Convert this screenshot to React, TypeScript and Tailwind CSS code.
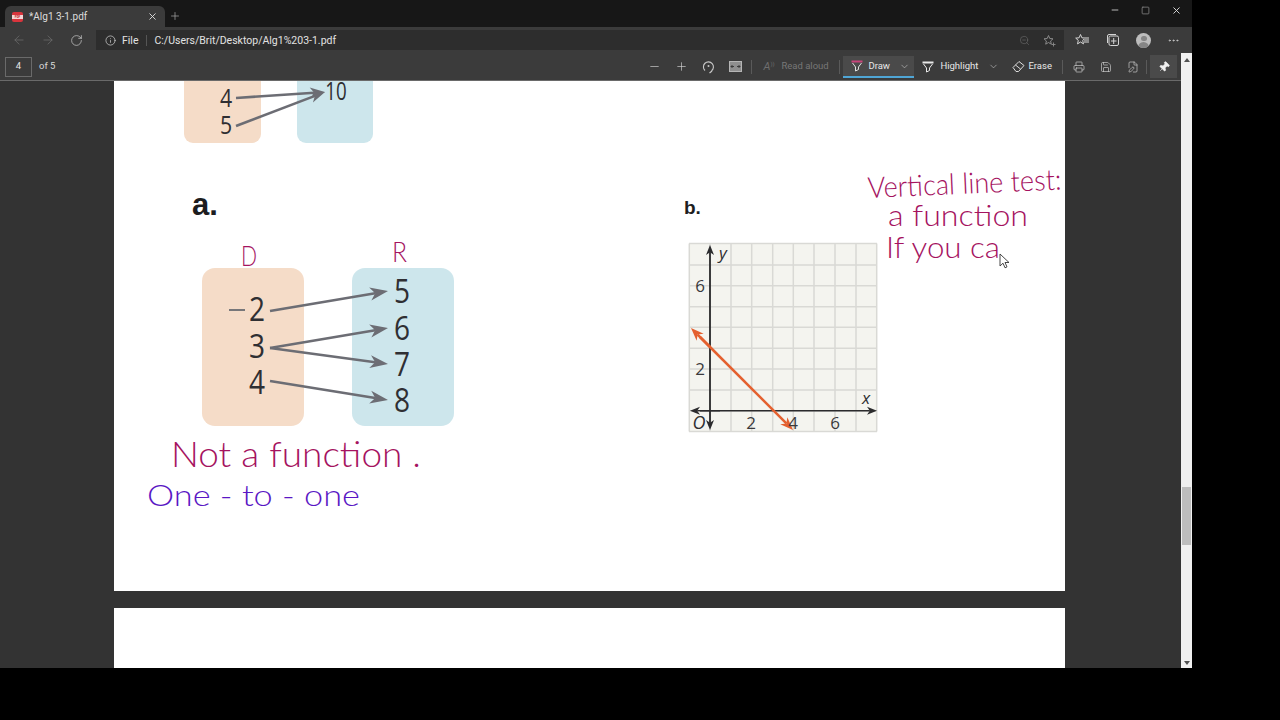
import React from 'react';
import {
  ArrowLeft, ArrowRight, RotateCw, Info, ZoomOut, Minus, Plus, X, Square, Pin, MoreHorizontal,
  ChevronDown, Printer, Save, FilePen,
} from 'lucide-react';

const ui = { fontFamily: 'Roboto, sans-serif' };
const pdfFont = '"Open Sans", sans-serif';
const inkFont = 'Lato, sans-serif';

function ToolButton({ children }: { children: React.ReactNode }) {
  return <div className="w-[27px] h-[27px] flex items-center justify-center shrink-0">{children}</div>;
}

function Divider({ className = '' }: { className?: string }) {
  return <div className={`w-px h-[14px] bg-[#5a5a5a] shrink-0 ${className}`} />;
}

function DrawIcon({ top, stroke }: { top: string; stroke: string }) {
  return (
    <svg width="14" height="14" viewBox="0 0 14 14" fill="none" className="shrink-0">
      <path d="M1.5 2.5h11" stroke={top} strokeWidth="2" />
      <path d="M2.5 4l3 4v4l3-1.5V8l3-4" stroke={stroke} strokeWidth="1" />
    </svg>
  );
}

function EraseIcon() {
  return (
    <svg width="13" height="13" viewBox="0 0 13 13" fill="none" className="shrink-0">
      <path d="M1 7.5L7 1.5l5 4-5.5 6H4z" stroke="#dcdcdc" strokeWidth="1" />
      <path d="M3.5 5l5 4" stroke="#dcdcdc" strokeWidth="1" />
    </svg>
  );
}

function RotateIcon() {
  return (
    <svg width="13" height="14" viewBox="0 0 13 14" fill="none">
      <path d="M3 10.5A5 5 0 1 1 9.5 10.8" stroke="#c8c8c8" strokeWidth="1.1" />
      <circle cx="6.5" cy="6" r="1" fill="#c8c8c8" />
      <path d="M7.5 13l2.5-2" stroke="#c8c8c8" strokeWidth="1.2" />
    </svg>
  );
}

function FitIcon() {
  return (
    <svg width="13" height="11" viewBox="0 0 13 11" fill="none">
      <rect x="0.5" y="0.5" width="12" height="10" fill="#8f8f8f" stroke="#b5b5b5" />
      <path d="M2 5.5h3M2 5.5l1.5-1.5M2 5.5L3.5 7M11 5.5H8M11 5.5L9.5 4M11 5.5L9.5 7" stroke="#333" strokeWidth="0.9" />
    </svg>
  );
}

function FavoritesIcon() {
  return (
    <svg width="15" height="14" viewBox="0 0 15 14" fill="none">
      <path d="M5.5 1.5l1.4 3.3 3.4.3-2.6 2.3.8 3.5-3-1.900-3 1.900.8-3.500L.7 5.100l3.400-.3z" stroke="#d4d4d4" strokeWidth="1" />
      <rect x="9" y="4" width="5" height="6" fill="#8a8a8a" />
    </svg>
  );
}

function CollectionsIcon() {
  return (
    <svg width="14" height="14" viewBox="0 0 14 14" fill="none">
      <rect x="3" y="3" width="9.5" height="9.5" rx="1.5" stroke="#d4d4d4" strokeWidth="1" />
      <path d="M1.5 10V3A1.5 1.5 0 0 1 3 1.5h7M7.7 5v6M5 8h5.500" stroke="#d4d4d4" strokeWidth="1" />
    </svg>
  );
}

function StarPlusIcon() {
  return (
    <svg width="13" height="13" viewBox="0 0 13 13" fill="none">
      <path d="M5.5 1.5l1.3 3 3.200.3-2.400 2.200.7 3.200-2.800-1.700-2.800 1.700.7-3.200L1 4.800l3.200-.3z" stroke="#8a8a8a" strokeWidth="1" />
      <path d="M10.5 8.500v4M8.500 10.500h4" stroke="#8a8a8a" strokeWidth="0.9" />
    </svg>
  );
}

function Arrow({ x1, y1, x2, y2, color = '#6c6d74', w = 2.6, len = 18, half = 6.5 }: {
  x1: number; y1: number; x2: number; y2: number; color?: string; w?: number; len?: number; half?: number;
}) {
  const a = Math.atan2(y2 - y1, x2 - x1);
  const c = Math.cos(a);
  const s = Math.sin(a);
  const bx = x2 - c * len;
  const by = y2 - s * len;
  const nx = x2 - c * len * 0.72;
  const ny = y2 - s * len * 0.72;
  return (
    <g>
      <line x1={x1} y1={y1} x2={nx} y2={ny} stroke={color} strokeWidth={w} />
      <polygon
        points={`${x2},${y2} ${bx - s * half},${by + c * half} ${nx},${ny} ${bx + s * half},${by - c * half}`}
        fill={color}
      />
    </g>
  );
}

function Num({ x, y, children, size = 33, italic = false, fill = '#2f2f33', sx = 1 }: {
  x: number; y: number; children: React.ReactNode; size?: number; italic?: boolean; fill?: string; sx?: number;
}) {
  return (
    <text
      transform={`translate(${x} ${y}) scale(${sx} 1)`}
      textAnchor="middle"
      fontFamily={pdfFont}
      fontSize={size}
      fontStyle={italic ? 'italic' : 'normal'}
      fill={fill}
    >
      {children}
    </text>
  );
}

function Ink({ x, y, w, size, rotate = 0, color = '#a5135f', children }: {
  x: number; y: number; w: number; size: number; rotate?: number; color?: string; children: string;
}) {
  return (
    <text
      x={x}
      y={y}
      fontFamily={inkFont}
      fontWeight={300}
      fontSize={size}
      fill={color}
      textLength={w}
      lengthAdjust="spacingAndGlyphs"
      transform={rotate ? `rotate(${rotate} ${x} ${y})` : undefined}
    >
      {children}
    </text>
  );
}

const gridX = [689.3, 710, 731, 751.7, 772.7, 793.3, 814, 835, 856, 876.7];
const gridY = [243.5, 265, 285.7, 306.7, 327.3, 348.3, 369, 390, 410.7, 431.5];

function PageOne() {
  return (
    <svg className="block" width={951} height={510} viewBox="114 81 951 510">
      {/* top mapping, cut off by the page edge */}
      <rect x={184} y={50} width={77} height={93} rx={9} fill="#f5dcc8" />
      <rect x={297} y={50} width={76} height={93} rx={9} fill="#cde6ec" />
      <Num x={226} y={107} size={25} sx={0.85}>4</Num>
      <Num x={226} y={134} size={25} sx={0.85}>5</Num>
      <Num x={336} y={100} size={25} sx={0.75}>10</Num>
      <Arrow x1={236} y1={98} x2={325} y2={92} len={15} half={5.5} />
      <Arrow x1={236} y1={126} x2={325} y2={92} len={15} half={5.5} />

      <text x={192} y={215} fontFamily='"Liberation Sans", sans-serif' fontWeight={700} fontSize={31} fill="#1d1d1f">a.</text>
      <text x={684} y={214} fontFamily='"Liberation Sans", sans-serif' fontWeight={700} fontSize={19} fill="#1d1d1f">b.</text>

      {/* mapping a */}
      <rect x={202} y={268} width={102} height={158} rx={13} fill="#f5dcc8" />
      <rect x={352} y={268} width={102} height={158} rx={13} fill="#cde6ec" />
      <rect x={229} y={309} width={16} height={2} fill="#77777a" />
      <Num x={257} y={321} sx={0.85}>2</Num>
      <Num x={257} y={358} sx={0.85}>3</Num>
      <Num x={257} y={394} sx={0.85}>4</Num>
      <Num x={402} y={303} sx={0.85}>5</Num>
      <Num x={402} y={340} sx={0.85}>6</Num>
      <Num x={402} y={376} sx={0.85}>7</Num>
      <Num x={402} y={412} sx={0.85}>8</Num>
      <Arrow x1={270} y1={311} x2={388} y2={291} />
      <Arrow x1={270} y1={348} x2={388} y2={328} />
      <Arrow x1={270} y1={348} x2={388} y2={364} />
      <Arrow x1={270} y1={381} x2={388} y2={400} />

      {/* graph b */}
      <rect x={689} y={243.5} width={188} height={188} fill="#f4f4ef" />
      {gridX.map((x) => <line key={x} x1={x} y1={243.5} x2={x} y2={431.5} stroke="#d9d9d5" strokeWidth={1.5} />)}
      {gridY.map((y) => <line key={y} x1={689} y1={y} x2={877} y2={y} stroke="#d9d9d5" strokeWidth={1.5} />)}
      <Arrow x1={710} y1={423} x2={710} y2={245} color="#2b2b2d" w={1.4} len={10} half={4} />
      <Arrow x1={710} y1={250} x2={710} y2={430} color="#2b2b2d" w={1.4} len={10} half={4} />
      <Arrow x1={700} y1={410.7} x2={877} y2={410.7} color="#2b2b2d" w={1.4} len={10} half={4} />
      <Arrow x1={720} y1={410.7} x2={690} y2={410.7} color="#2b2b2d" w={1.4} len={10} half={4} />
      <Arrow x1={710} y1={347} x2={691} y2={328} color="#e4602f" w={2.5} len={13} half={5} />
      <Arrow x1={700} y1={337} x2={793} y2={430} color="#e4602f" w={2.5} len={13} half={5} />
      <Num x={723} y={259} size={17} italic>y</Num>
      <Num x={866} y={404} size={17} italic>x</Num>
      <Num x={700} y={292} size={17} fill="#3a3a3c">6</Num>
      <Num x={700} y={375} size={17} fill="#3a3a3c">2</Num>
      <Num x={699} y={429} size={18} italic>O</Num>
      <Num x={751} y={429} size={17} fill="#3a3a3c">2</Num>
      <Num x={793} y={429} size={17} fill="#3a3a3c">4</Num>
      <Num x={835} y={429} size={17} fill="#3a3a3c">6</Num>

      {/* handwriting */}
      <Ink x={241} y={266} w={16} size={27}>D</Ink>
      <Ink x={392} y={262} w={15} size={27}>R</Ink>
      <Ink x={171} y={467} w={250} size={35}>Not a function .</Ink>
      <Ink x={147} y={506} w={213} size={29} color="#5a17c4">One - to - one</Ink>
      <Ink x={868} y={198} w={194} size={29} rotate={-2.5}>Vertical line test:</Ink>
      <Ink x={888} y={226} w={140} size={30}>a function</Ink>
      <Ink x={886} y={258} w={114} size={30}>If you ca</Ink>

      {/* pointer */}
      <path d="M1000 254v12l3-2.8 2 4.6 2-.9-2-4.4h4z" fill="#fff" stroke="#333" strokeWidth={0.9} />
    </svg>
  );
}

export default function App() {
  return (
    <div className="w-[1280px] h-[720px] bg-black overflow-hidden" style={ui}>
      <div className="w-[1192px] h-[668px] flex flex-col bg-[#333333]">
        {/* title bar */}
        <div className="h-[27px] bg-[#171717] flex items-end pl-[5px] shrink-0">
          <div className="w-[160px] h-[21px] bg-[#3b3b3b] rounded-t-md flex items-center pl-[7px] pr-[7px]">
            <div className="w-[11px] h-[10px] rounded-[2px] bg-[#d8343c] flex items-center justify-center overflow-hidden">
              <div className="w-full h-[4px] bg-[#f4d4d4] text-[3px] text-[#c02028] text-center font-bold leading-[4px]">PDF</div>
            </div>
            <span className="ml-[6px] text-[10px] text-[#dddddd]">*Alg1 3-1.pdf</span>
            <X className="ml-auto w-[11px] h-[11px] text-[#e0e0e0]" strokeWidth={2} />
          </div>
          <Plus className="ml-[4px] mb-[5px] w-[12px] h-[12px] text-[#a0a0a0]" strokeWidth={1.5} />
          <div className="ml-auto h-[27px] flex items-center pb-[7px]">
            <div className="w-[31px] flex justify-center"><Minus className="w-[10px] h-[10px] text-[#d8d8d8]" /></div>
            <div className="w-[31px] flex justify-center"><Square className="w-[9px] h-[9px] text-[#8a8a8a]" /></div>
            <div className="w-[31px] flex justify-center"><X className="w-[11px] h-[11px] text-[#e0e0e0]" /></div>
          </div>
        </div>

        {/* address row */}
        <div className="h-[26px] bg-[#3b3b3b] flex items-center shrink-0">
          <div className="w-[96px] flex items-center pl-[5px]">
            <ToolButton><ArrowLeft className="w-[14px] h-[14px] text-[#6e6e6e]" strokeWidth={1.25} /></ToolButton>
            <div className="w-[2px]" />
            <ToolButton><ArrowRight className="w-[14px] h-[14px] text-[#6e6e6e]" strokeWidth={1.25} /></ToolButton>
            <div className="w-[2px]" />
            <ToolButton><RotateCw className="w-[13px] h-[13px] text-[#cfcfcf]" strokeWidth={1.25} /></ToolButton>
          </div>
          <div className="w-[968px] h-[20px] bg-[#2d2d2d] flex items-center pl-[9px] pr-[6px]">
            <Info className="w-[11px] h-[11px] text-[#d8d8d8]" strokeWidth={1.5} />
            <span className="ml-[6px] mt-[1px] text-[10.5px] text-[#e2e2e2]">File</span>
            <div className="ml-[8px] w-px h-[11px] bg-[#555555]" />
            <span className="ml-[7px] mt-[1px] text-[10.5px] text-[#e2e2e2]">C:/Users/Brit/Desktop/Alg1%203-1.pdf</span>
            <ZoomOut className="ml-auto w-[11px] h-[11px] text-[#6e6e6e]" strokeWidth={1.25} />
            <div className="ml-[13px]"><StarPlusIcon /></div>
            <div className="w-[2px]" />
          </div>
          <div className="flex items-center pl-[5px]">
            <div className="w-[27px] flex justify-center"><FavoritesIcon /></div>
            <div className="w-[3px]" />
            <div className="w-[27px] flex justify-center"><CollectionsIcon /></div>
            <div className="w-[4px]" />
            <div className="w-[27px] flex justify-center">
              <div className="w-[15px] h-[15px] rounded-full bg-[#bdbdbd] flex flex-col items-center overflow-hidden">
                <div className="mt-[3px] w-[6px] h-[6px] rounded-full bg-[#858585]" />
                <div className="mt-[1px] w-[11px] h-[6px] rounded-t-full bg-[#858585]" />
              </div>
            </div>
            <div className="w-[3px]" />
            <div className="w-[27px] flex justify-center"><MoreHorizontal className="w-[13px] h-[13px] text-[#cfcfcf]" strokeWidth={1.5} /></div>
          </div>
        </div>

        <div className="flex-1 min-h-0 flex">
          <div className="flex-1 min-w-0 flex flex-col">
            {/* pdf toolbar */}
            <div className="h-[28px] bg-[#3b3b3b] flex items-center pl-[5px] shrink-0 text-[9.5px] border-b border-[#6a6a6a]">
              <div className="w-[27px] h-[20px] border border-[#6a6a6a] flex items-center justify-center text-[9.5px] text-[#e6e6e6]">4</div>
              <span className="ml-[7px] text-[9.5px] text-[#d8d8d8]">of 5</span>

              <div className="ml-[586px] flex items-center">
                <ToolButton><Minus className="w-[13px] h-[13px] text-[#d0d0d0]" strokeWidth={1.25} /></ToolButton>
                <ToolButton><Plus className="w-[13px] h-[13px] text-[#d0d0d0]" strokeWidth={1.25} /></ToolButton>
                <ToolButton><RotateIcon /></ToolButton>
                <ToolButton><FitIcon /></ToolButton>
              </div>
              <Divider className="ml-[2px]" />
              <div className="ml-[11px] w-[12px] flex items-start text-[#6e6e6e] text-[11px] leading-none italic">A<span className="text-[6px] not-italic">))</span></div>
              <span className="ml-[6px] w-[47px] text-[#777777] whitespace-nowrap">Read aloud</span>
              <Divider className="ml-[11px]" />
              <div className="ml-[3px] mt-[1px] w-[71px] h-[22px] bg-[#4a4a4a] border-b-2 border-[#4fa6d6] flex items-center pl-[7px]">
                <DrawIcon top="#c8447a" stroke="#e0e0e0" />
                <span className="ml-[4px] text-[#e8e8e8]">Draw</span>
                <ChevronDown className="ml-auto mr-[4px] w-[11px] h-[11px] text-[#cfcfcf]" strokeWidth={1.25} />
              </div>
              <div className="ml-[7px]"><DrawIcon top="#e8e8e8" stroke="#e8e8e8" /></div>
              <span className="ml-[5px] w-[38px] text-[#e8e8e8] whitespace-nowrap">Highlight</span>
              <ChevronDown className="ml-[10px] w-[11px] h-[11px] text-[#cfcfcf]" strokeWidth={1.25} />
              <div className="ml-[13px]"><EraseIcon /></div>
              <span className="ml-[3px] w-[22px] text-[#e8e8e8]">Erase</span>
              <Divider className="ml-[12px]" />
              <div className="ml-[2px] flex items-center">
                <ToolButton><Printer className="w-[12px] h-[12px] text-[#d8d8d8]" strokeWidth={1.25} /></ToolButton>
                <ToolButton><Save className="w-[12px] h-[12px] text-[#d8d8d8]" strokeWidth={1.25} /></ToolButton>
                <ToolButton><FilePen className="w-[12px] h-[12px] text-[#d8d8d8]" strokeWidth={1.25} /></ToolButton>
              </div>
              <Divider />
              <div className="ml-[3px] w-[27px] h-[23px] bg-[#4a4a4a] flex items-center justify-center">
                <Pin className="w-[12px] h-[12px] text-[#f0f0f0] fill-[#f0f0f0] rotate-45" strokeWidth={1.25} />
              </div>
            </div>

            {/* viewer */}
            <div className="flex-1 min-h-0 overflow-hidden pl-[114px]">
              <div className="w-[951px] h-[510px] bg-white overflow-hidden"><PageOne /></div>
              <div className="w-[951px] h-[200px] mt-[17px] bg-white" />
            </div>
          </div>

          <div className="w-[11px] bg-[#f0f0f0] flex flex-col items-center">
            <div className="mt-[5px] w-0 h-0 border-x-[3px] border-x-transparent border-b-[4px] border-b-[#505050]" />
            <div className="mt-[425px] w-[9px] h-[58px] bg-[#bdbdbd]" />
            <div className="mt-auto mb-[3px] w-0 h-0 border-x-[3px] border-x-transparent border-t-[4px] border-t-[#505050]" />
          </div>
        </div>
      </div>
    </div>
  );
}
